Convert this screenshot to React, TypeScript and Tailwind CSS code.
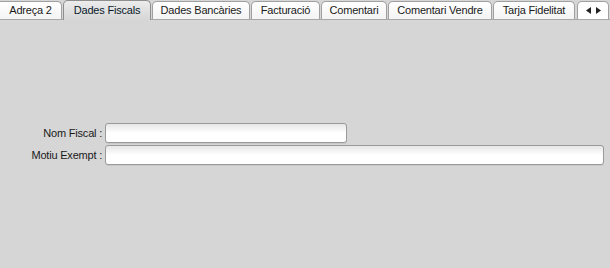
import React from "react";

const tabs = [
  { label: "Adreça 2", w: "w-[62px]", first: true },
  { label: "Dades Fiscals", w: "w-[88px]", sel: true },
  { label: "Dades Bancàries", w: "w-[98px]" },
  { label: "Facturació", w: "w-[69px]" },
  { label: "Comentari", w: "w-[66px]" },
  { label: "Comentari Vendre", w: "w-[104px]" },
  { label: "Tarja Fidelitat", w: "w-[82px]" },
];

export default function App() {
  return (
    <div className="w-[610px] h-[268px] bg-[#d6d6d6] overflow-hidden text-[11px] tracking-[-0.2px] text-[#1a1a1a]" style={{ fontFamily: '"Liberation Sans", Arial, sans-serif' }}>
      <div className="flex items-end gap-[1px] h-[20px] border-b border-[#a8a8a8]">
        {tabs.map((t) =>
          t.sel ? (
            <div
              key={t.label}
              className={`${t.w} shrink-0 h-[20px] mb-[-1px] flex items-center justify-center rounded-t-[5px] border border-b-0 border-[#8e8e8e] bg-gradient-to-b from-[#ececec] to-[#d6d6d6] text-[#0a1a2a]`}
            >
              {t.label}
            </div>
          ) : (
            <div
              key={t.label}
              className={`${t.w} shrink-0 h-[18px] flex items-center justify-center rounded-t-[5px] border border-b-0 border-[#a0a0a0] bg-gradient-to-b from-white to-[#f4f4f4] ${t.first ? "border-l-0 rounded-tl-none" : ""}`}
            >
              {t.label}
            </div>
          )
        )}
        <div className="shrink-0 w-[32px] h-[18px] ml-[1px] flex items-center justify-center gap-[5px] rounded-t-[5px] border border-b-0 border-[#a0a0a0] bg-white">
          <svg width="5" height="7" viewBox="0 0 5 7"><path d="M5 0 L0 3.5 L5 7 Z" fill="#222" /></svg>
          <svg width="5" height="7" viewBox="0 0 5 7"><path d="M0 0 L5 3.5 L0 7 Z" fill="#222" /></svg>
        </div>
      </div>
      <div className="pt-[103px] flex flex-col gap-[2px]">
        <div className="flex items-center h-[20px]">
          <div className="w-[103px] text-right pr-[1px] shrink-0">Nom Fiscal :</div>
          <div className="ml-[2px] w-[242px] h-[20px] rounded-[3px] border border-[#9a9a9a] bg-gradient-to-b from-[#e6e6e6] via-white to-white shadow-[0_1px_0_#c8c8c8]" />
        </div>
        <div className="flex items-center h-[20px]">
          <div className="w-[103px] text-right pr-[1px] shrink-0">Motiu Exempt :</div>
          <div className="ml-[2px] w-[499px] h-[20px] rounded-[3px] border border-[#9a9a9a] bg-gradient-to-b from-[#e6e6e6] via-white to-white shadow-[0_1px_0_#c8c8c8]" />
        </div>
      </div>
    </div>
  );
}
